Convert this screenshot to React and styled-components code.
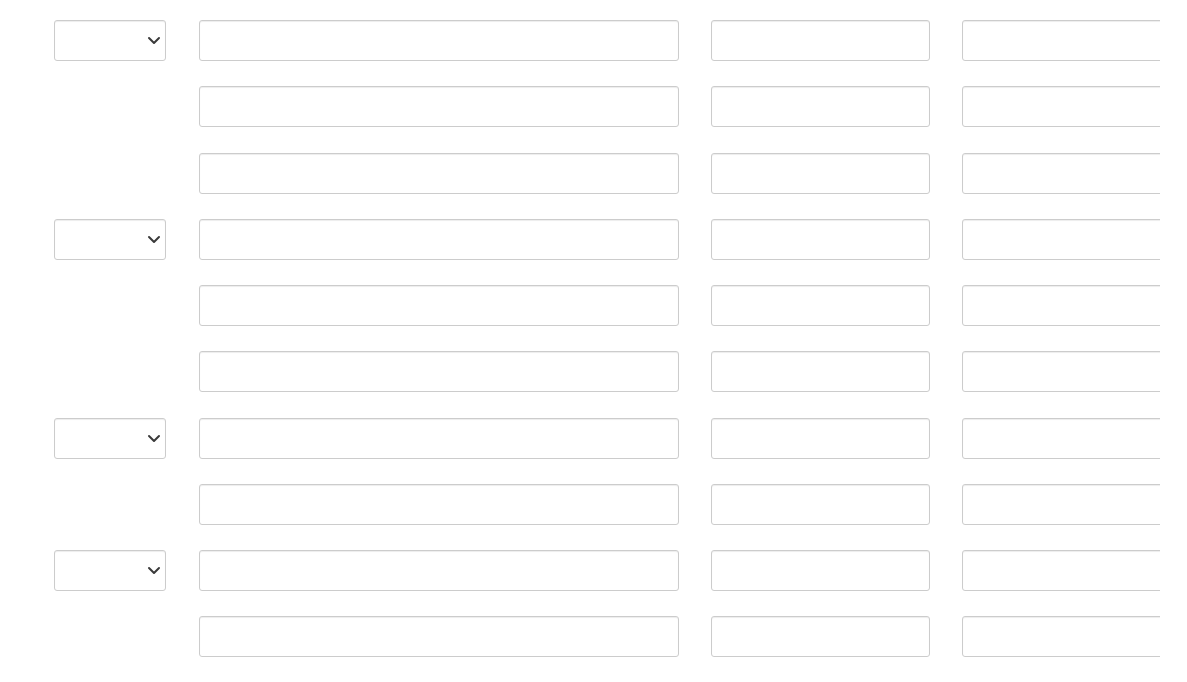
import React from "react";
import styled, { createGlobalStyle } from "styled-components";

const Global = createGlobalStyle`
  html, body { margin: 0; padding: 0; background: #fff; }
  body { font-family: "Open Sans", "Liberation Sans", sans-serif; font-size: 14px; color: #333; }
  * { box-sizing: border-box; }
`;

const Viewport = styled.div`
  width: 1160px;
  overflow: hidden;
  padding: 20px 0 0 54px;
`;

const Grid = styled.div`
  display: grid;
  grid-template-columns: 113px 480px 219px 219px;
  column-gap: 32px;
  row-gap: 25.25px;
  grid-auto-rows: 41px;
  width: 1200px;
`;

const SelectCell = styled.div`
  grid-column: 1;
  position: relative;
  width: 112px;
  height: 41px;
`;

const Select = styled.select`
  appearance: none;
  -webkit-appearance: none;
  width: 112px;
  height: 41px;
  border: 1px solid #ccc;
  border-radius: 3px;
  background: #fff;
  box-shadow: inset 0 1px 1px rgba(0, 0, 0, 0.075);
  font: inherit;
  color: #333;
  padding: 0 28px 0 10px;
  outline: none;
`;

const Chevron = styled.svg`
  position: absolute;
  left: 93px;
  top: 16px;
  width: 14px;
  height: 9px;
  pointer-events: none;
`;

const Input = styled.input`
  grid-column: ${(p) => p.$col};
  width: 100%;
  height: 41px;
  border: 1px solid #ccc;
  border-radius: 3px;
  background: #fff;
  box-shadow: inset 0 1px 1px rgba(0, 0, 0, 0.075);
  font: inherit;
  padding: 6px 12px;
  outline: none;
`;

const groups = [3, 3, 2, 2];

export default function App() {
  const rows = [];
  groups.forEach((n, gi) => {
    for (let i = 0; i < n; i++) rows.push({ first: i === 0, key: `${gi}-${i}` });
  });
  return (
    <>
      <Global />
      <Viewport>
        <Grid>
          {rows.map((r) => (
            <React.Fragment key={r.key}>
              {r.first ? (
                <SelectCell>
                  <Select defaultValue="">
                    <option value=""></option>
                  </Select>
                  <Chevron viewBox="0 0 14 9">
                    <path
                      d="M2 2 L7 7 L12 2"
                      fill="none"
                      stroke="#3a3a3a"
                      strokeWidth="2"
                      strokeLinecap="round"
                      strokeLinejoin="round"
                    />
                  </Chevron>
                </SelectCell>
              ) : (
                <div />
              )}
              <Input $col={2} />
              <Input $col={3} />
              <Input $col={4} />
            </React.Fragment>
          ))}
        </Grid>
      </Viewport>
    </>
  );
}
